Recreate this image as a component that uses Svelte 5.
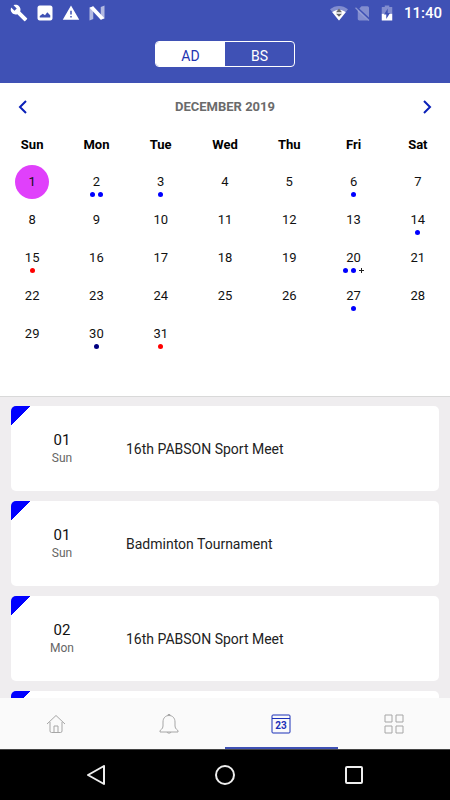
<script>
  const weekdays = ["Sun", "Mon", "Tue", "Wed", "Thu", "Fri", "Sat"];

  const marks = {
    2: { dots: ["blue", "blue"] },
    3: { dots: ["blue"] },
    6: { dots: ["blue"] },
    14: { dots: ["blue"] },
    15: { dots: ["red"] },
    20: { dots: ["blue", "blue"], more: true },
    27: { dots: ["blue"] },
    30: { dots: ["navy"] },
    31: { dots: ["red"] },
  };

  const events = [
    { day: 1, title: "16th PABSON Sport Meet" },
    { day: 1, title: "Badminton Tournament" },
    { day: 2, title: "16th PABSON Sport Meet" },
    { day: 2, title: "Badminton Tournament" },
  ];

  let calendarType = $state("AD");
  let year = $state(2019);
  let month = $state(11);
  let selected = $state(1);
  let tab = $state("calendar");

  let monthName = $derived(
    new Date(year, month, 1).toLocaleString("en-US", { month: "long" })
  );
  let isMarkedMonth = $derived(year == 2019 && month == 11);
  let weeks = $derived(buildWeeks(year, month));

  function buildWeeks(y, m) {
    const offset = new Date(y, m, 1).getDay();
    const count = new Date(y, m + 1, 0).getDate();
    const rows = [];
    for (let start = 1 - offset; start <= count; start += 7) {
      rows.push(
        weekdays.map((_, i) => {
          const d = start + i;
          return d > 0 && d <= count ? d : null;
        })
      );
    }
    return rows;
  }

  function moveMonth(step) {
    const next = new Date(year, month + step, 1);
    year = next.getFullYear();
    month = next.getMonth();
  }

  function pad(day) {
    return String(day).padStart(2, "0");
  }
</script>

<div class="app">
  <header>
    <div class="status">
      <svg viewBox="0 0 24 24" fill="#fff">
        <path
          d="M22.7 19l-9.1-9.1c.9-2.3.4-5-1.5-6.9-2-2-5-2.4-7.4-1.3L9 6 6 9 1.6 4.7C.4 7.1.9 10.1 2.9 12.1c1.9 1.9 4.6 2.4 6.9 1.5l9.1 9.1c.4.4 1 .4 1.4 0l2.3-2.3c.5-.4.5-1.1.1-1.4z"
        />
      </svg>
      <svg viewBox="0 0 24 24" fill="#fff">
        <path
          d="M22 19V5c0-1.500-1-3-3-3H5C3 2 2 3.500 2 5v14c0 1.500 1 3 3 3h14c2 0 3-1.500 3-3zM5 18v-2l4-3 3 2 3-4 4 4v3z"
          fill-rule="evenodd"
        />
      </svg>
      <svg viewBox="0 0 24 24" fill="#fff">
        <path d="M1 21h22L12 2 1 21zm12-3h-2v-2h2v2zm0-4h-2v-5h2v5z" />
      </svg>
      <svg viewBox="0 0 24 24" fill="#fff">
        <path d="M2 5l5-2v17l-5 2zM22 2v17l-5 2V4z" opacity=".6" />
        <path d="M2 5l5-2 15 16-5 2z" />
      </svg>

      <span class="spacer"></span>

      <svg viewBox="0 0 24 24">
        <path d="M12 22L0 7C7 1 17 1 24 7z" fill="#fff" opacity=".35" />
        <path d="M12 22L3 11c5-4.500 13-4.500 18 0z" fill="#fff" />
        <path d="M12 6l4 5H8zM12 17l-4-4h8z" fill="#666" />
      </svg>
      <svg viewBox="0 0 24 24">
        <path
          d="M10 3h8c1 0 2 1 2 2v13L7 6zM5 8l14 14H7c-1 0-2-1-2-2z"
          fill="#fff"
          opacity=".35"
        />
        <path d="M2 5l18 17" stroke="#fff" stroke-width="1.500" opacity=".4" />
      </svg>
      <svg viewBox="0 0 24 24" fill="#fff">
        <path d="M5 13V5c0-1 .5-1 1-1h3V2h6v2h3c1 0 1 0 1 1v8z" opacity=".35" />
        <path d="M5 13h14v8c0 1 0 1-1 1H6c-1 0-1 0-1-1z" />
        <path d="M13 6l-5 8h3v6l5-8h-3z" fill="#3f51b5" />
      </svg>
      <time>11:40</time>
    </div>

    <div class="toggle">
      {#each ["AD", "BS"] as type}
        <button
          class:chosen={calendarType == type}
          aria-pressed={calendarType == type}
          onclick={() => (calendarType = type)}>{type}</button
        >
      {/each}
    </div>
  </header>

  <section class="calendar">
    <div class="month">
      <button aria-label="Previous month" onclick={() => moveMonth(-1)}>
        <svg viewBox="0 0 16 16"><path d="M10 2L4 8l6 6" /></svg>
      </button>
      <h1>{monthName} {year}</h1>
      <button aria-label="Next month" onclick={() => moveMonth(1)}>
        <svg viewBox="0 0 16 16"><path d="M6 2l6 6-6 6" /></svg>
      </button>
    </div>

    <table>
      <thead>
        <tr>
          {#each weekdays as name}
            <th scope="col">{name}</th>
          {/each}
        </tr>
      </thead>
      <tbody>
        {#each weeks as week}
          <tr>
            {#each week as day}
              <td>
                {#if day}
                  <button
                    class="day"
                    class:selected={selected == day}
                    onclick={() => (selected = day)}
                  >
                    <span class="number">{day}</span>
                    {#if isMarkedMonth && marks[day]}
                      <span class="dots">
                        {#each marks[day].dots as color}
                          <i class="dot {color}"></i>
                        {/each}
                        {#if marks[day].more}<i class="more"></i>{/if}
                      </span>
                    {/if}
                  </button>
                {/if}
              </td>
            {/each}
          </tr>
        {/each}
      </tbody>
    </table>
  </section>

  <main>
    {#each events as event}
      <article>
        <div class="date">
          <strong>{pad(event.day)}</strong>
          <span>{weekdays[new Date(2019, 11, event.day).getDay()]}</span>
        </div>
        <p>{event.title}</p>
      </article>
    {/each}
  </main>

  <nav class="tabs">
    <button
      class:active={tab == "home"}
      aria-label="Home"
      onclick={() => (tab = "home")}
    >
      <svg viewBox="0 0 20 20">
        <path d="M1 10l9-8.500 9 8.500M4 8v9q0 1.500 1.500 1.500h9Q16 18.500 16 17V8M8 18v-6h4v6" />
      </svg>
    </button>
    <button
      class:active={tab == "notices"}
      aria-label="Notices"
      onclick={() => (tab = "notices")}
    >
      <svg viewBox="0 0 20 20">
        <path
          d="M1 18v-1c0-1.500 3-1.500 3-5V8c0-4 2.500-6.500 6-6.500S16 4 16 8v4c0 3.500 3 3.500 3 5v1zM8.500 1.500c0-1.500 3-1.500 3 0M8 18c0 1.500 4 1.500 4 0"
        />
      </svg>
    </button>
    <button
      class:active={tab == "calendar"}
      aria-label="Calendar"
      onclick={() => (tab = "calendar")}
    >
      <svg viewBox="0 0 20 20">
        <rect x="1" y="1" width="18" height="18" rx="1" />
        <path d="M1 4.500h18" />
        <text x="10" y="15" text-anchor="middle">23</text>
      </svg>
    </button>
    <button
      class:active={tab == "more"}
      aria-label="More"
      onclick={() => (tab = "more")}
    >
      <svg viewBox="0 0 20 20">
        <path d="M1 1h7v7H1zM12 1h7v7h-7zM1 12h7v7H1zM12 12h7v7h-7z" />
      </svg>
    </button>
  </nav>

  <nav class="system">
    <button aria-label="Back">
      <svg viewBox="0 0 20 20"><path d="M18 1v18L2 10z" /></svg>
    </button>
    <button aria-label="Home screen">
      <svg viewBox="0 0 20 20"><circle cx="10" cy="10" r="9" /></svg>
    </button>
    <button aria-label="Recent apps">
      <svg viewBox="0 0 20 20">
        <rect x="2" y="2" width="16" height="16" rx="1" />
      </svg>
    </button>
  </nav>
</div>

<style>
  :global(body) {
    margin: 0;
  }

  .app {
    height: 100vh;
    display: flex;
    flex-direction: column;
    overflow: hidden;
    background: #efedef;
    color: #111;
    font-family: Roboto, sans-serif;
    font-size: 14px;
  }

  button {
    padding: 0;
    border: 0;
    background: none;
    color: inherit;
    font: inherit;
    cursor: pointer;
  }

  svg {
    display: block;
    flex: none;
  }

  header {
    padding-bottom: 16px;
    background: #3f51b5;
  }

  .status {
    display: flex;
    align-items: center;
    gap: 8px;
    height: 26px;
    padding: 0 8px 0 10px;
  }

  .status svg {
    width: 18px;
    height: 18px;
  }

  .status .spacer {
    flex: 1;
  }

  .status .spacer ~ svg {
    margin-right: -2px;
  }

  .status time {
    margin-left: 2px;
    color: #fff;
    font-size: 15px;
    font-weight: 500;
  }

  .toggle {
    display: flex;
    width: 140px;
    height: 26px;
    margin: 15px auto 0;
    box-sizing: border-box;
    border: 1px solid #fff;
    border-radius: 4px;
    overflow: hidden;
  }

  .toggle button {
    flex: 1;
    padding-top: 4px;
    color: #fff;
  }

  .toggle .chosen {
    background: #fff;
    color: #1f35b0;
  }

  .calendar {
    flex: none;
    padding-bottom: 43px;
    background: #fff;
  }

  .month {
    display: flex;
    align-items: center;
    justify-content: space-between;
    height: 37px;
    padding: 5px 16px 0;
  }

  .month svg {
    width: 16px;
    height: 16px;
    fill: none;
    stroke: #0a20b8;
    stroke-width: 2;
  }

  h1 {
    margin: 0;
    color: #6b6b6b;
    font-size: 13px;
    font-weight: 700;
    text-transform: uppercase;
  }

  table {
    width: 100%;
    table-layout: fixed;
    border-collapse: collapse;
  }

  th {
    height: 38px;
    padding: 0;
    color: #000;
    font-size: 13px;
    font-weight: 700;
  }

  td {
    height: 34px;
    padding: 2px 0;
    vertical-align: top;
  }

  .day {
    display: flex;
    flex-direction: column;
    align-items: center;
    width: 34px;
    height: 34px;
    margin: 0 auto;
    padding-top: 7px;
    border-radius: 50%;
    box-sizing: border-box;
    font-size: 13px;
  }

  .day.selected {
    background: #e040fb;
  }

  .number {
    line-height: 20px;
  }

  .dots {
    display: flex;
    align-items: center;
    gap: 3px;
  }

  .dot {
    width: 5px;
    height: 5px;
    border-radius: 50%;
  }

  .blue {
    background: #00f;
  }

  .red {
    background: #f00;
  }

  .navy {
    background: #000080;
  }

  /* small plus sign after the dots */
  .more {
    width: 5px;
    height: 5px;
    background:
      linear-gradient(#222, #222) center / 5px 1px no-repeat,
      linear-gradient(#222, #222) center / 1px 5px no-repeat;
  }

  main {
    flex: 1;
    min-height: 0;
    display: flex;
    flex-direction: column;
    gap: 10px;
    padding: 9px 11px 10px;
    border-top: 1px solid #d9d9d9;
    overflow-y: auto;
    scrollbar-width: none;
  }

  article {
    flex: none;
    display: flex;
    align-items: center;
    height: 85px;
    border-radius: 5px;
    background: linear-gradient(135deg, #00f 14px, #fff 14px);
  }

  .date {
    display: flex;
    flex-direction: column;
    align-items: center;
    width: 102px;
    margin-right: 13px;
    line-height: 18px;
  }

  .date strong {
    font-size: 15px;
    font-weight: 400;
  }

  .date span {
    color: #666;
    font-size: 12px;
  }

  article p {
    margin: 0;
    color: #222;
  }

  .tabs {
    flex: none;
    display: flex;
    height: 51px;
    background: #fafafa;
  }

  .tabs button {
    flex: 1;
    display: flex;
    align-items: center;
    justify-content: center;
    border-top: 2px solid transparent;
    border-bottom: 2px solid transparent;
    color: #a6a6a6;
  }

  .tabs .active {
    border-bottom-color: #3f51b5;
    color: #1a30b8;
  }

  .tabs svg {
    width: 20px;
    height: 20px;
    fill: none;
    stroke: currentColor;
  }

  .tabs text {
    fill: currentColor;
    stroke: none;
    font-size: 10px;
    font-weight: 700;
  }

  .system {
    flex: none;
    display: flex;
    height: 50px;
    padding: 0 32px;
    border-top: 1px solid #444;
    background: #000;
  }

  .system button {
    flex: 1;
    display: flex;
    align-items: center;
    justify-content: center;
  }

  .system svg {
    width: 20px;
    height: 20px;
    fill: none;
    stroke: #eee;
    stroke-width: 2;
    stroke-linejoin: round;
  }
</style>
